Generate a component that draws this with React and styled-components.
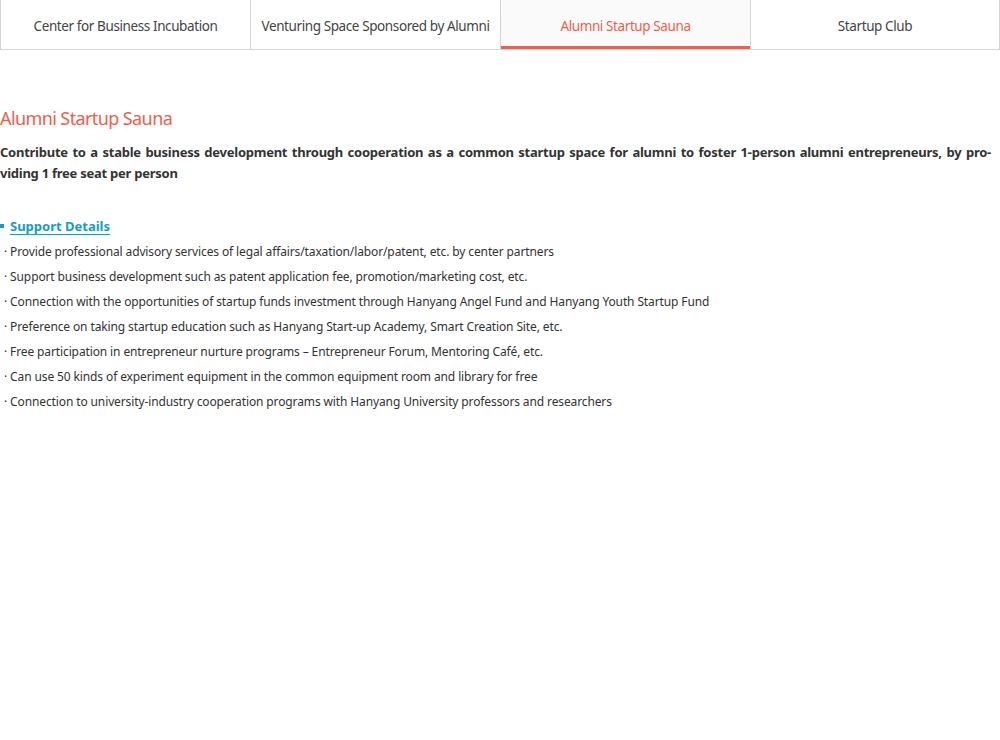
import React from "react";
import styled, { createGlobalStyle } from "styled-components";

const Global = createGlobalStyle`
  html, body { margin: 0; padding: 0; background: #fff; }
  body { font-family: "Noto Sans", "Liberation Sans", sans-serif; color: #333; }
`;

const Tabs = styled.ul`
  list-style: none;
  margin: 0;
  padding: 0;
  display: grid;
  grid-template-columns: repeat(4, 1fr);
  width: 1000px;
  box-sizing: border-box;
  border-bottom: 1px solid #d5d5d5;
`;

const Tab = styled.li`
  height: 49px;
  box-sizing: border-box;
  display: flex;
  align-items: center;
  justify-content: center;
  white-space: nowrap;
  border-left: 1px solid #d5d5d5;
  border-right: ${(p) => (p.$last ? "1px solid #d5d5d5" : "0")};
  font-size: 13.5px;
  letter-spacing: -0.4px;
  color: ${(p) => (p.$active ? "#ef5f4b" : "#444")};
  background: ${(p) => (p.$active ? "#fafafa" : "#fff")};
  box-shadow: ${(p) => (p.$active ? "inset 0 -3px 0 #ef5f4b" : "none")};
  padding-top: 3px;
`;

const Content = styled.section`
  width: 991px;
  padding-top: 55px;
`;

const Title = styled.h2`
  margin: 0;
  font-size: 18px;
  font-weight: 400;
  color: #ef5f4b;
  letter-spacing: -0.6px;
  line-height: 26px;
`;

const Lead = styled.p`
  margin: 11px 0 0;
  font-size: 13px;
  font-weight: 700;
  color: #333;
  line-height: 21px;
  letter-spacing: -0.25px;
  text-align: justify;
`;

const SectionHead = styled.h3`
  margin: 32px 0 0;
  display: flex;
  align-items: center;
  gap: 6px;
  font-size: 13px;
  font-weight: 700;
  line-height: 20px;
  color: #129dca;
  &::before {
    content: "";
    width: 4px;
    height: 4px;
    background: #129dca;
  }
`;

const Link = styled.span`
  text-decoration: underline;
  text-underline-offset: 3px;
`;

const List = styled.ul`
  list-style: none;
  margin: 3px 0 0;
  padding: 0 0 0 4px;
`;

const Item = styled.li`
  font-size: 12px;
  color: #333;
  line-height: 25px;
  letter-spacing: -0.12px;
`;

const tabs = [
  "Center for Business Incubation",
  "Venturing Space Sponsored by Alumni",
  "Alumni Startup Sauna",
  "Startup Club",
];

const items = [
  "Provide professional advisory services of legal affairs/taxation/labor/patent, etc. by center partners",
  "Support business development such as patent application fee, promotion/marketing cost, etc.",
  "Connection with the opportunities of startup funds investment through Hanyang Angel Fund and Hanyang Youth Startup Fund",
  "Preference on taking startup education such as Hanyang Start-up Academy, Smart Creation Site, etc.",
  "Free participation in entrepreneur nurture programs – Entrepreneur Forum, Mentoring Café, etc.",
  "Can use 50 kinds of experiment equipment in the common equipment room and library for free",
  "Connection to university-industry cooperation programs with Hanyang University professors and researchers",
];

export default function App() {
  return (
    <>
      <Global />
      <Tabs>
        {tabs.map((t, i) => (
          <Tab key={t} $active={i === 2} $last={i === 3}>
            {t}
          </Tab>
        ))}
      </Tabs>
      <Content>
        <Title>Alumni Startup Sauna</Title>
        <Lead>
          Contribute to a stable business development through cooperation as a common startup space for alumni
          to foster 1-person alumni entrepreneurs, by pro-viding 1 free seat per person
        </Lead>
        <SectionHead>
          <Link>Support Details</Link>
        </SectionHead>
        <List>
          {items.map((it) => (
            <Item key={it}>· {it}</Item>
          ))}
        </List>
      </Content>
    </>
  );
}
